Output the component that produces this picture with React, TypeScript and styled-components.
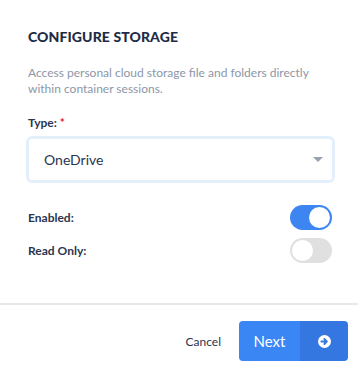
import React, { useState } from 'react';
import styled, { createGlobalStyle } from 'styled-components';

const GlobalStyle = createGlobalStyle`
  * {
    box-sizing: border-box;
  }
  body {
    margin: 0;
    background: #ffffff;
    font-family: Lato, 'Noto Sans', sans-serif;
  }
`;

const Panel = styled.div`
  width: 358px;
  height: 370px;
  display: flex;
  flex-direction: column;
  background: #fff;
`;

const Body = styled.div`
  padding: 28px 26px 0 26px;
  display: flex;
  flex-direction: column;
`;

const Title = styled.h2`
  margin: 0 0 0 2px;
  font-size: 14px;
  font-weight: 900;
  color: #1d2b45;
  letter-spacing: 0.1px;
  line-height: 18px;
`;

const Description = styled.p`
  margin: 19px 0 0 2px;
  font-size: 12px;
  line-height: 16px;
  color: #8d96a7;
`;

const Label = styled.label`
  display: block;
  margin: 18px 0 0 2px;
  font-size: 12px;
  font-weight: 700;
  color: #2a3550;
  line-height: 16px;
`;

const Required = styled.span`
  color: #e02020;
`;

const Select = styled.div`
  margin-top: 5px;
  height: 47px;
  width: 309px;
  border: 3px solid #e4effc;
  border-radius: 6px;
  display: flex;
  align-items: center;
  justify-content: space-between;
  padding: 0 9px 0 15px;
  font-size: 14px;
  color: #2a3550;
`;

const Caret = styled.span`
  width: 0;
  height: 0;
  border-left: 5px solid transparent;
  border-right: 5px solid transparent;
  border-top: 5px solid #9aa0b1;
`;

const Options = styled.div`
  margin-top: 22px;
  display: flex;
  flex-direction: column;
  gap: 8px;
  padding-left: 2px;
`;

const Row = styled.div`
  display: flex;
  align-items: center;
  justify-content: space-between;
  height: 25px;
  font-size: 12px;
  font-weight: 700;
  color: #2a3550;
`;

const Switch = styled.button<{ on: boolean }>`
  width: 42px;
  height: 25px;
  border: none;
  border-radius: 13px;
  padding: 2px;
  display: flex;
  justify-content: ${(p) => (p.on ? 'flex-end' : 'flex-start')};
  background: ${(p) => (p.on ? '#3d86f2' : '#e0e0e0')};
  cursor: pointer;
`;

const Knob = styled.span`
  width: 21px;
  height: 21px;
  border-radius: 50%;
  background: #fff;
`;

const Divider = styled.hr`
  margin: 40px 0 0 0;
  border: none;
  border-top: 2px solid #e8e8e8;
`;

const Footer = styled.div`
  display: flex;
  justify-content: flex-end;
  align-items: center;
  padding: 16px 10px 0 0;
  gap: 18px;
`;

const CancelButton = styled.button`
  border: none;
  background: none;
  font-family: inherit;
  font-size: 12px;
  color: #2a3550;
  cursor: pointer;
  padding: 0;
`;

const NextButton = styled.button`
  display: flex;
  height: 40px;
  width: 109px;
  border: none;
  border-radius: 4px;
  overflow: hidden;
  padding: 0;
  cursor: pointer;
  font-family: inherit;
`;

const NextLabel = styled.span`
  flex: 1;
  display: flex;
  align-items: center;
  justify-content: center;
  background: #3b86f5;
  color: #fff;
  font-size: 15px;
`;

const NextIcon = styled.span`
  width: 48px;
  display: flex;
  align-items: center;
  justify-content: center;
  background: #3577e0;
`;

function ArrowCircle() {
  return (
    <svg width="13" height="13" viewBox="0 0 14 14">
      <circle cx="7" cy="7" r="7" fill="#fff" />
      <path d="M3.6 7h5.6M6.8 4.3 9.5 7 6.8 9.7" stroke="#3577e0" strokeWidth="2" fill="none" strokeLinecap="round" strokeLinejoin="round" />
    </svg>
  );
}

export default function App() {
  const [enabled, setEnabled] = useState(true);
  const [readOnly, setReadOnly] = useState(false);
  return (
    <Panel>
      <GlobalStyle />
      <Body>
        <Title>CONFIGURE STORAGE</Title>
        <Description>
          Access personal cloud storage file and folders directly within
          container sessions.
        </Description>
        <Label>
          Type: <Required>*</Required>
        </Label>
        <Select>
          OneDrive
          <Caret />
        </Select>
        <Options>
          <Row>
            Enabled:
            <Switch on={enabled} onClick={() => setEnabled(!enabled)}>
              <Knob />
            </Switch>
          </Row>
          <Row>
            Read Only:
            <Switch on={readOnly} onClick={() => setReadOnly(!readOnly)}>
              <Knob />
            </Switch>
          </Row>
        </Options>
      </Body>
      <Divider />
      <Footer>
        <CancelButton>Cancel</CancelButton>
        <NextButton>
          <NextLabel>Next</NextLabel>
          <NextIcon>
            <ArrowCircle />
          </NextIcon>
        </NextButton>
      </Footer>
    </Panel>
  );
}
